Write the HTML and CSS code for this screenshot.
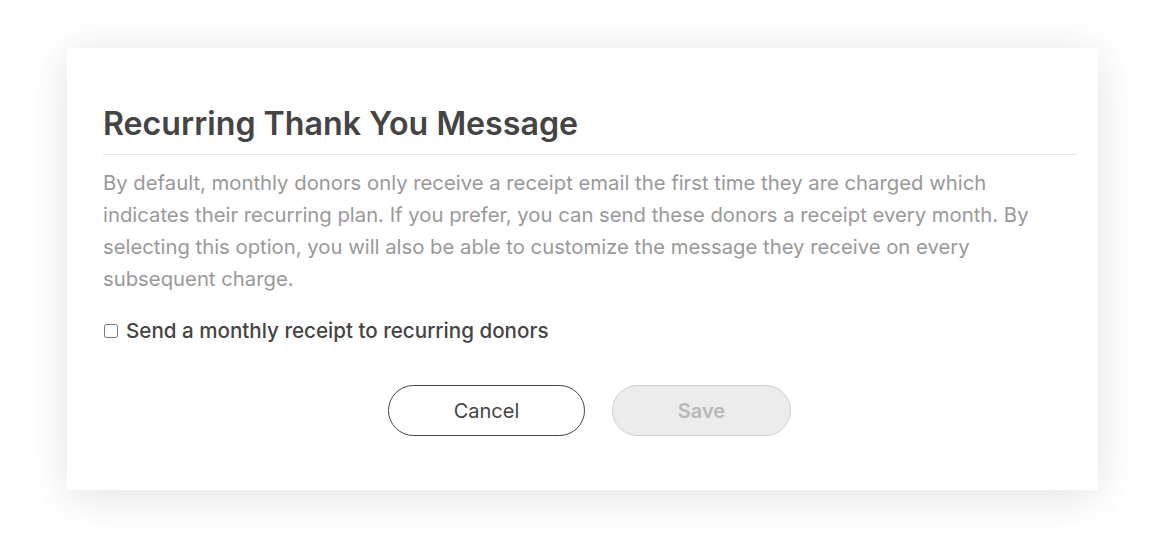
FILE: index.html
```html
<!DOCTYPE html>
<html>
<head>
<meta charset="utf-8">
<link rel="stylesheet" href="styles.css">
</head>
<body>
<div class="page">
  <div class="card">
    <h2 class="title">Recurring Thank You Message</h2>
    <p class="desc">By default, monthly donors only receive a receipt email the first time they are charged which indicates their recurring plan. If you prefer, you can send these donors a receipt every month. By selecting this option, you will also be able to customize the message they receive on every subsequent charge.</p>
    <label class="check"><input type="checkbox" class="box"><span>Send a monthly receipt to recurring donors</span></label>
    <div class="actions">
      <button class="btn btn-cancel">Cancel</button>
      <button class="btn btn-save" disabled>Save</button>
    </div>
  </div>
</div>
</body>
</html>
```
FILE: styles.css
```css
html, body {
  margin: 0;
  padding: 0;
  background: #ffffff;
  font-family: Inter, "Noto Sans", sans-serif;
}
.page {
  box-sizing: border-box;
  min-height: 537px;
  padding: 48px 0 47px 67px;
}
.card {
  box-sizing: border-box;
  width: 1031px;
  height: 442px;
  background: #fff;
  padding: 58px 22px 0 36px;
  box-shadow: 0 0 45px rgba(0,0,0,0.07), 0 12px 40px rgba(0,0,0,0.05);
}
.title {
  margin: 0;
  font-size: 32.2px;
  line-height: 36px;
  font-weight: 600;
  color: #444;
  padding-bottom: 12px;
  border-bottom: 1px solid #e2e2e2;
}
.desc {
  margin: 12px 0 0;
  font-size: 20.3px;
  line-height: 32px;
  color: #999;
  font-weight: 400;
}
.check {
  display: flex;
  align-items: center;
  margin-top: 22px;
  font-size: 20.6px;
  line-height: 28px;
  font-weight: 500;
  color: #444;
}
.box {
  margin: 0 8px 0 1px;
  width: 14px;
  height: 14px;
}
.actions {
  display: flex;
  justify-content: center;
  gap: 27px;
  margin-top: 40px;
}
.btn {
  height: 51px;
  border-radius: 26px;
  font-family: Inter, "Noto Sans", sans-serif;
  font-size: 20px;
}
.btn-cancel {
  width: 197px;
  background: #fff;
  border: 1px solid #444;
  color: #444;
}
.btn-save {
  width: 179px;
  background: #ececec;
  border: 1px solid #cfcfcf;
  color: #b8b8b8;
  font-weight: 600;
}
```
